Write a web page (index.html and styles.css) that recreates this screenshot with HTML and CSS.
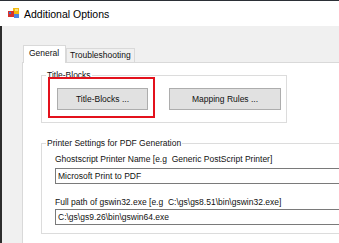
FILE: index.html
```html
<!DOCTYPE html>
<html lang="en">
<head>
    <meta charset="UTF-8">
    <title>Additional Options</title>
    <link rel="stylesheet" href="styles.css">
</head>
<body>
    <div class="window">
        <div class="titlebar">
            <svg class="app-icon" width="12" height="11" viewBox="0 0 12 11">
                <rect x="5" y="0" width="6" height="6" fill="#f2b90f"/>
                <rect x="0" y="3" width="6" height="6" fill="#d9322b"/>
                <rect x="1" y="4" width="2" height="2" fill="#3b6fd1"/>
                <rect x="6" y="6" width="5" height="4" fill="#4e86e0"/>
                <rect x="7" y="1" width="3" height="2" fill="#fbe37a"/>
            </svg>
            <span class="title">Additional Options</span>
        </div>

        <div class="client">
            <div class="tabcontrol">
                <div class="tabstrip">
                    <div class="tab active">General</div>
                    <div class="tab">Troubleshooting</div>
                </div>

                <div class="tabpage">
                    <fieldset class="group group-blocks">
                        <legend>Title-Blocks</legend>
                        <div class="group-body button-row">
                            <div class="callout">
                                <button class="win-btn btn-blocks">Title-Blocks ...</button>
                            </div>
                            <button class="win-btn btn-mapping">Mapping Rules ...</button>
                        </div>
                    </fieldset>

                    <fieldset class="group group-printer">
                        <legend>Printer Settings for PDF Generation</legend>
                        <div class="group-body fields">
                            <div class="field-label">Ghostscript Printer Name [e.g&nbsp; Generic PostScript Printer]</div>
                            <div class="textbox">Microsoft Print to PDF</div>
                            <div class="field-label second">Full path of gswin32.exe [e.g&nbsp; C:\gs\gs8.51\bin\gswin32.exe]</div>
                            <div class="textbox">C:\gs\gs9.26\bin\gswin64.exe</div>
                        </div>
                    </fieldset>
                </div>
            </div>
        </div>
    </div>
</body>
</html>
```

FILE: styles.css
```css
* {
    margin: 0;
    padding: 0;
    box-sizing: border-box;
}

body {
    width: 339px;
    height: 243px;
    overflow: hidden;
    background: #f0f0f0;
    font-family: 'Liberation Sans', Arial, sans-serif;
    font-size: 8.5px;
    color: #111;
}

.window {
    height: 243px;
    border-top: 1px solid #2b2f36;
    display: flex;
    flex-direction: column;
}

.titlebar {
    height: 25px;
    background: #fff;
    display: flex;
    align-items: center;
    padding-left: 8px;
    gap: 4px;
}

.title {
    font-size: 10.5px;
    color: #000;
}

.client {
    flex: 1;
    background: #f0f0f0;
    border-left: 2px solid #2d2d2d;
    padding: 19px 0 0 20px;
    overflow: hidden;
}

.tabcontrol {
    width: 420px;
}

.tabstrip {
    display: flex;
    align-items: flex-end;
    height: 17px;
    padding-left: 1px;
}

.tab {
    border: 1px solid #d9d9d9;
    border-bottom: none;
    background: #f0f0f0;
    height: 14px;
    line-height: 13px;
    padding: 0 3px;
}

.tab.active {
    position: relative;
    z-index: 1;
    background: #fff;
    height: 18px;
    line-height: 15px;
    margin-bottom: -1px;
    padding: 0 5px;
    width: 43px;
}

.tabpage {
    background: #fff;
    border: 1px solid #d9d9d9;
    height: 200px;
    padding: 7px 0 0 18px;
}

.group {
    border: 1px solid #dcdcdc;
    padding: 0;
}

.group legend {
    margin-left: 4px;
    padding: 0 1px;
    line-height: 10px;
}

.group-blocks {
    width: 246px;
}

.button-row {
    display: flex;
    gap: 21px;
    padding: 8px 0 12px 15px;
}

.win-btn {
    display: block;
    height: 22px;
    background: #e1e1e1;
    border: 1px solid #adadad;
    font-family: inherit;
    font-size: 8.5px;
    color: #111;
}

.btn-blocks {
    width: 91px;
}

.btn-mapping {
    width: 112px;
}

.callout {
    position: relative;
}

.callout::after {
    content: "";
    position: absolute;
    top: -11px;
    left: -9px;
    right: -7px;
    bottom: -8px;
    border: 2px solid #e3111c;
}

.group-printer {
    width: 360px;
    margin-top: 15px;
}

.fields {
    padding: 6px 0 8px 13px;
}

.field-label {
    line-height: 10px;
    margin-bottom: 4px;
}

.field-label.second {
    margin-top: 13px;
    margin-bottom: 2px;
}

.textbox {
    height: 16px;
    border: 1px solid #7a7a7a;
    background: #fff;
    padding-left: 2px;
    line-height: 14px;
}
```
